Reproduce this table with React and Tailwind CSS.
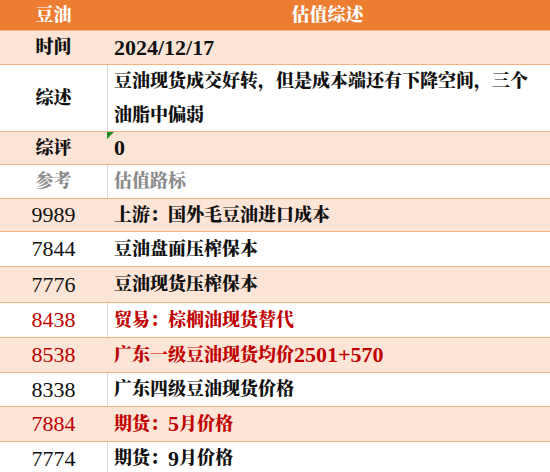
import React from "react";

const font = { fontFamily: '"Liberation Serif", "Noto Serif CJK SC", "Noto Sans CJK SC", serif' };

function N({ children, bold = true }) {
  return <span className={`text-[22px] leading-none ${bold ? "font-bold" : "font-normal"}`}>{children}</span>;
}

function Row({ h, pink, left, leftCls = "", children, rightCls = "", divider = true }) {
  return (
    <div
      className={`flex border-b border-[#F4B183] ${pink ? "bg-[#FCE4D6]" : "bg-white"} ${h}`}
    >
      <div
        className={`w-[107px] shrink-0 flex items-center justify-center text-[18px] ${leftCls}`}
      >
        {left}
      </div>
      <div
        className={`flex-1 flex items-center pl-[6px] text-[18px] font-black border-l whitespace-nowrap ${
          !pink && divider ? "border-[#D9D9D9]" : "border-transparent"
        } ${rightCls}`}
      >
        {children}
      </div>
    </div>
  );
}

export default function App() {
  return (
    <div className="w-[550px] h-[472px] overflow-hidden bg-white text-[#111]" style={font}>
      <div className="flex h-[31px] bg-[#ED7D31] text-white font-black text-[18px] border-b border-[#F4B183]">
        <div className="w-[107px] shrink-0 flex items-center justify-center">豆油</div>
        <div className="flex-1 flex items-center justify-center pr-[2px]">估值综述</div>
      </div>
      <Row h="h-[34px]" pink left="时间" leftCls="font-black">
        <N>2024/12/17</N>
      </Row>
      <Row h="h-[67px]" left="综述" leftCls="font-black">
        <div className="flex flex-col leading-[34px] whitespace-nowrap">
          <span>豆油现货成交好转，但是成本端还有下降空间，三个</span>
          <span>油脂中偏弱</span>
        </div>
      </Row>
      <Row h="h-[33px]" pink left="综评" leftCls="font-black">
        <div className="relative h-full flex items-center">
          <N>0</N>
          <div className="absolute top-0 left-[-7px] w-0 h-0 border-t-[7px] border-t-[#1E8C1E] border-r-[7px] border-r-transparent" />
        </div>
      </Row>
      <Row h="h-[34px]" left="参考" leftCls="font-black text-[#8C8C8C]" rightCls="text-[#8C8C8C]">
        估值路标
      </Row>
      <Row h="h-[33px]" pink left={<N bold={false}>9989</N>}>
        上游：国外毛豆油进口成本
      </Row>
      <Row h="h-[35px]" left={<N bold={false}>7844</N>} divider={false}>
        豆油盘面压榨保本
      </Row>
      <Row h="h-[36px]" pink left={<N bold={false}>7776</N>}>
        豆油现货压榨保本
      </Row>
      <Row h="h-[35px]" left={<N bold={false}>8438</N>} leftCls="text-[#C00000]" rightCls="text-[#C00000]">
        贸易：棕榈油现货替代
      </Row>
      <Row h="h-[35px]" pink left={<N bold={false}>8538</N>} leftCls="text-[#C00000]" rightCls="text-[#C00000]">
        广东一级豆油现货均价<N>2501+570</N>
      </Row>
      <Row h="h-[34px]" left={<N bold={false}>8338</N>}>
        广东四级豆油现货价格
      </Row>
      <Row h="h-[35px]" pink left={<N bold={false}>7884</N>} leftCls="text-[#C00000]" rightCls="text-[#C00000]">
        期货：<N>5</N>月价格
      </Row>
      <Row h="h-[34px]" left={<N bold={false}>7774</N>}>
        期货：<N>9</N>月价格
      </Row>
    </div>
  );
}
